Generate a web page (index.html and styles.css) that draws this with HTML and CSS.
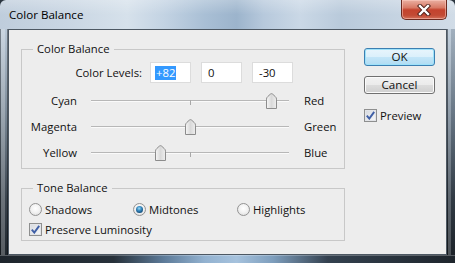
FILE: index.html
```html
<!DOCTYPE html>
<html>
<head>
<meta charset="utf-8">
<link rel="stylesheet" href="styles.css">
</head>
<body>
<div class="window">
  <div class="titlebar">
    <span class="title">Color Balance</span>
    <div class="close">
      <svg width="14" height="12" viewBox="0 0 14 12">
        <path d="M3 2 L11 10 M11 2 L3 10" stroke="#4a1d16" stroke-width="4.2" stroke-linecap="square"/>
        <path d="M3 2 L11 10 M11 2 L3 10" stroke="#ffffff" stroke-width="2.4" stroke-linecap="square"/>
      </svg>
    </div>
  </div>
  <div class="mid">
    <div class="frame-l"></div>
    <div class="client">
      <div class="main">
        <fieldset class="group g1">
          <legend>Color Balance</legend>
          <div class="levels">
            <span class="levels-label">Color Levels:</span>
            <span class="num focus"><span class="sel">+82</span></span>
            <span class="num">0</span>
            <span class="num">-30</span>
          </div>
          <div class="srow">
            <span class="lab-l">Cyan</span>
            <div class="track">
              <svg class="thumb" style="left: calc(91% - 5.5px)" width="11" height="16" viewBox="0 0 11 16">
                <defs><linearGradient id="tg1" x1="0" y1="0" x2="1" y2="0"><stop offset="0" stop-color="#f7f7f7"/><stop offset="0.5" stop-color="#d9d9d9"/><stop offset="1" stop-color="#eeeeee"/></linearGradient></defs>
                <path d="M0.5 15.5 V6.2 Q0.5 4.6 1.8 3.5 L4.4 1.1 Q5.5 0.2 6.6 1.1 L9.2 3.5 Q10.5 4.6 10.5 6.2 V15.5 Z" fill="url(#tg1)" stroke="#8c8c8c"/>
              </svg>
            </div>
            <span class="lab-r">Red</span>
          </div>
          <div class="srow">
            <span class="lab-l">Magenta</span>
            <div class="track">
              <svg class="thumb" style="left: calc(50% - 5.5px)" width="11" height="16" viewBox="0 0 11 16">
                <defs><linearGradient id="tg2" x1="0" y1="0" x2="1" y2="0"><stop offset="0" stop-color="#f7f7f7"/><stop offset="0.5" stop-color="#d9d9d9"/><stop offset="1" stop-color="#eeeeee"/></linearGradient></defs>
                <path d="M0.5 15.5 V6.2 Q0.5 4.6 1.8 3.5 L4.4 1.1 Q5.5 0.2 6.6 1.1 L9.2 3.5 Q10.5 4.6 10.5 6.2 V15.5 Z" fill="url(#tg2)" stroke="#8c8c8c"/>
              </svg>
            </div>
            <span class="lab-r">Green</span>
          </div>
          <div class="srow">
            <span class="lab-l">Yellow</span>
            <div class="track">
              <svg class="thumb" style="left: calc(35% - 5.5px)" width="11" height="16" viewBox="0 0 11 16">
                <defs><linearGradient id="tg3" x1="0" y1="0" x2="1" y2="0"><stop offset="0" stop-color="#f7f7f7"/><stop offset="0.5" stop-color="#d9d9d9"/><stop offset="1" stop-color="#eeeeee"/></linearGradient></defs>
                <path d="M0.5 15.5 V6.2 Q0.5 4.6 1.8 3.5 L4.4 1.1 Q5.5 0.2 6.6 1.1 L9.2 3.5 Q10.5 4.6 10.5 6.2 V15.5 Z" fill="url(#tg3)" stroke="#8c8c8c"/>
              </svg>
            </div>
            <span class="lab-r">Blue</span>
          </div>
        </fieldset>
        <fieldset class="group g2">
          <legend>Tone Balance</legend>
          <div class="radios">
            <label class="ritem"><span class="radio"></span>Shadows</label>
            <label class="ritem"><span class="radio on"></span>Midtones</label>
            <label class="ritem"><span class="radio"></span>Highlights</label>
          </div>
          <label class="citem lum"><span class="cbox"><svg width="9" height="9" viewBox="0 0 9 9"><path d="M0.8 4.6 L3.3 7.6 L8.2 0.9" fill="none" stroke="#3f5fa6" stroke-width="1.9"/></svg></span>Preserve Luminosity</label>
        </fieldset>
      </div>
      <div class="side">
        <div class="btn default">OK</div>
        <div class="btn">Cancel</div>
        <label class="citem preview"><span class="cbox"><svg width="9" height="9" viewBox="0 0 9 9"><path d="M0.8 4.6 L3.3 7.6 L8.2 0.9" fill="none" stroke="#3f5fa6" stroke-width="1.9"/></svg></span>Preview</label>
      </div>
    </div>
    <div class="frame-r"></div>
  </div>
  <div class="frame-b"></div>
</div>
</body>
</html>
```
FILE: styles.css
```css
* { box-sizing: border-box; }
html, body { margin: 0; padding: 0; }
body {
  width: 455px;
  height: 263px;
  overflow: hidden;
  font-family: "Open Sans", "Noto Sans", sans-serif;
  font-size: 11.3px;
  color: #111;
}
.window {
  width: 455px;
  height: 263px;
  display: flex;
  flex-direction: column;
  background: #2b3540;
}
.titlebar {
  height: 29px;
  display: flex;
  align-items: flex-start;
  background:
    linear-gradient(to bottom, rgba(255,255,255,0.25), rgba(255,255,255,0) 50%),
    linear-gradient(to right, #bfcddc 0%, #c9d6e3 15%, #d6e1eb 28%, #c3d3e3 36%, #a9bfd5 45%, #9cb4cc 52%, #b7c9dc 58%, #cad8e6 66%, #b9cadb 75%, #c6d4e2 88%, #d1dce7 100%);
  border-top-right-radius: 6px;
  border-top-left-radius: 6px;
}
.title {
  margin: 7px 0 0 9px;
  line-height: 16px;
  font-size: 11.6px;
  color: #000;
}
.close {
  margin-left: auto;
  margin-right: 8px;
  width: 46px;
  height: 20px;
  border: 1px solid #6b2a20;
  border-top: none;
  border-radius: 0 0 5px 5px;
  background: linear-gradient(#eab0a2 0%, #d87a66 40%, #c4432e 52%, #c24a34 80%, #d2705a 100%);
  box-shadow: inset 0 0 0 1px rgba(255,210,200,0.5);
  display: flex;
  align-items: center;
  justify-content: center;
}
.mid {
  display: flex;
  height: 226px;
}
.frame-l {
  width: 8px;
  background:
    linear-gradient(to right, rgba(0,0,0,0.35) 0 1px, rgba(255,255,255,0.25) 1px 5px, rgba(0,0,0,0) 5px 7px, rgba(0,0,0,0.4) 7px 8px),
    linear-gradient(to bottom, #b9c8d7 0%, #7f8e9c 35%, #3a444e 75%, #1f262d 100%);
}
.frame-r {
  width: 8px;
  background:
    linear-gradient(to right, rgba(0,0,0,0.4) 0 1px, rgba(255,255,255,0.2) 1px 4px, rgba(0,0,0,0.1) 4px 8px),
    linear-gradient(to bottom, #b4c4d4 0%, #6f7f8f 40%, #36414c 75%, #20272e 100%);
}
.frame-b {
  height: 8px;
  background:
    linear-gradient(to bottom, rgba(255,255,255,0.25) 0 1px, rgba(0,0,0,0) 1px),
    linear-gradient(to right, #1e252c 0%, #27313a 25%, #5d7b99 36%, #93b2d0 45%, #a6c2dd 52%, #7e9ebd 60%, #34414f 72%, #1e252c 100%);
}
.client {
  width: 439px;
  border: 1px solid #4d5863;
  background: #ededed;
  display: flex;
  padding: 11px 0 0 12px;
  gap: 19px;
}
.main {
  width: 324px;
  display: flex;
  flex-direction: column;
  gap: 11px;
}
fieldset.group {
  margin: 0;
  border: 1px solid #c8c8c8;
  min-width: 0;
  padding: 5px 0 3px 0;
}
legend {
  padding: 0 4px;
  margin-left: 11px;
  line-height: 16px;
}
.levels {
  display: flex;
  align-items: center;
  height: 21px;
}
.levels-label {
  width: 120px;
  text-align: right;
  margin-right: 8px;
}
.num {
  width: 41px;
  height: 21px;
  background: #fff;
  border: 1px solid #dcdcdc;
  padding-left: 6px;
  display: flex;
  align-items: center;
  margin-right: 10px;
}
.num.focus { padding-left: 4px; }
.sel {
  background: #3399ff;
  color: #fff;
  padding: 0 1px;
  line-height: 14px;
}
.srow {
  display: flex;
  align-items: center;
  height: 26px;
}
.levels + .srow { margin-top: 4px; }
.lab-l {
  width: 55px;
  text-align: right;
  margin-right: 14px;
}
.lab-r { margin-left: 15px; }
.track {
  position: relative;
  width: 198px;
  height: 1px;
  background: #b7b7b7;
  box-shadow: 0 1px 0 #fafafa;
}
.track::after {
  content: "";
  position: absolute;
  left: 99px;
  top: 0;
  width: 1px;
  height: 5px;
  background: #a8a8a8;
}
.thumb {
  position: absolute;
  top: -7px;
  z-index: 1;
  display: block;
}
.radios {
  display: flex;
  align-items: center;
  height: 16px;
  padding-left: 7px;
}
.ritem {
  width: 104px;
  display: flex;
  align-items: center;
  gap: 3px;
}
.radio {
  width: 13px;
  height: 13px;
  border-radius: 50%;
  border: 1px solid #939393;
  background: radial-gradient(circle at 50% 40%, #ffffff 0%, #f3f3f3 45%, #d8d8d8 100%);
  position: relative;
  flex: none;
}
.radio.on::after {
  content: "";
  position: absolute;
  left: 2px;
  top: 2px;
  width: 7px;
  height: 7px;
  border-radius: 50%;
  background: radial-gradient(circle at 45% 35%, #9fdcf6 0%, #3e8fc4 35%, #0f4b7b 75%, #0a3050 100%);
}
.citem {
  display: flex;
  align-items: center;
  gap: 3px;
  height: 16px;
}
.lum {
  margin-top: 4px;
  padding-left: 7px;
}
.cbox {
  width: 13px;
  height: 13px;
  border: 1px solid #8e8f8f;
  box-shadow: inset 0 0 0 1px #e2e4e8;
  display: flex;
  align-items: center;
  justify-content: center;
  flex: none;
  background-image: linear-gradient(135deg, #d5d9df, #f8f8f8);
}
.side {
  width: 71px;
  padding-top: 7px;
  display: flex;
  flex-direction: column;
}
.btn {
  width: 71px;
  height: 18px;
  border: 1px solid #707070;
  border-radius: 3px;
  background: linear-gradient(#f2f2f2 0%, #ebebeb 50%, #dddddd 50%, #cfcfcf 100%);
  box-shadow: inset 0 0 0 1px #fbfbfb;
  line-height: 16px;
  font-size: 11.6px;
  text-align: center;
}
.btn.default {
  border-color: #3c7fb1;
  background: linear-gradient(#e8f5fc 0%, #dbf0fb 50%, #c4e6f8 50%, #b0dcf3 100%);
  box-shadow: inset 0 0 0 1px #9ee2fa;
}
.btn + .btn { margin-top: 10px; }
.preview { margin-top: 13px; }
```
